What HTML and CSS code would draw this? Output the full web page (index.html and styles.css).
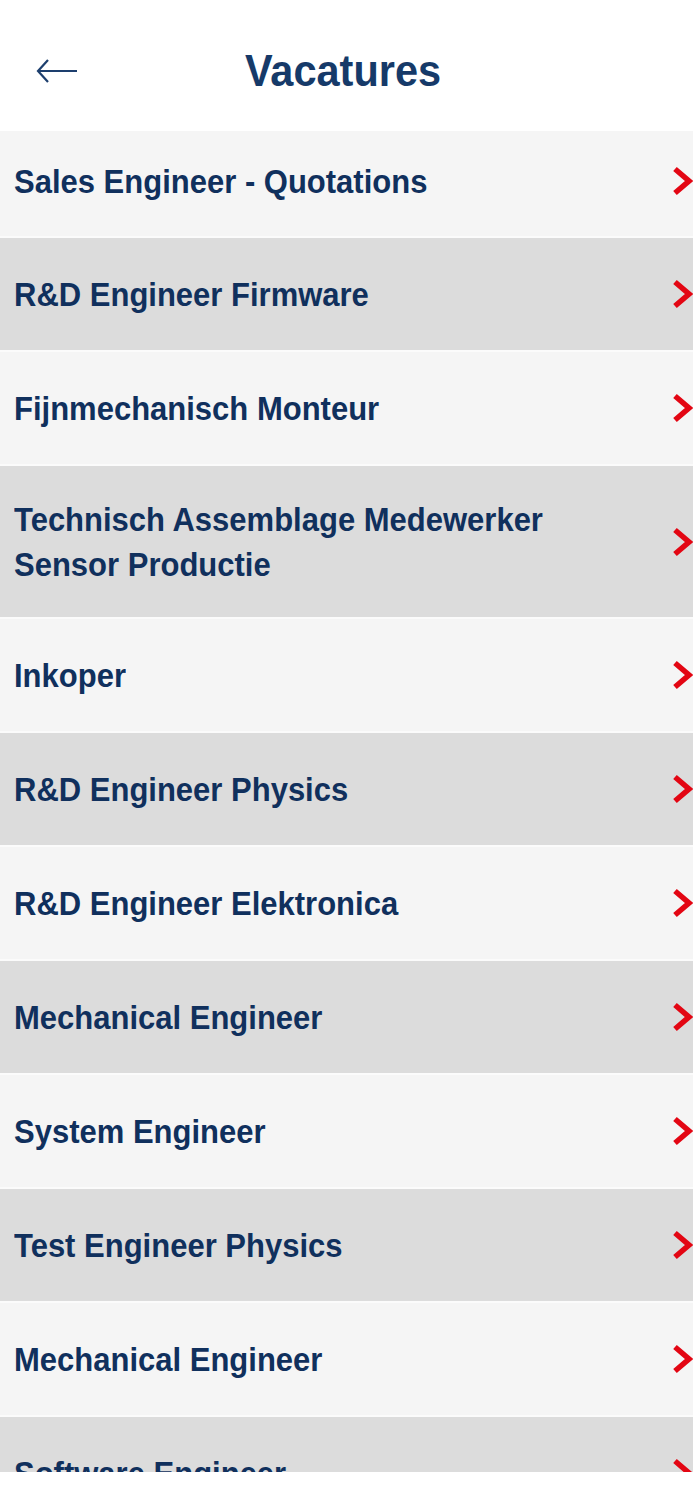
FILE: index.html
```html
<!DOCTYPE html>
<html lang="nl">
<head>
<meta charset="utf-8">
<title>Vacatures</title>
<link rel="stylesheet" href="styles.css">
</head>
<body>
<div class="page">
  <header class="topbar">
    <span class="back" aria-label="Terug">
      <svg width="42" height="26" viewBox="0 0 42 26"><path d="M2 13 H41 M12 2 L2 13 L12 24" fill="none" stroke="#1d3f6e" stroke-width="2.2" stroke-linejoin="miter"/></svg>
    </span>
    <h1 class="title">Vacatures</h1>
  </header>
  <ul class="jobs">
    <li class="job first"><span class="job-title">Sales Engineer - Quotations</span><svg class="chev" width="22" height="30" viewBox="0 0 22 30"><polyline points="4,3 18,15 4,27" fill="none" stroke="#e30613" stroke-width="5.5"/></svg></li>
    <li class="job"><span class="job-title">R&amp;D Engineer Firmware</span><svg class="chev" width="22" height="30" viewBox="0 0 22 30"><polyline points="4,3 18,15 4,27" fill="none" stroke="#e30613" stroke-width="5.5"/></svg></li>
    <li class="job"><span class="job-title">Fijnmechanisch Monteur</span><svg class="chev" width="22" height="30" viewBox="0 0 22 30"><polyline points="4,3 18,15 4,27" fill="none" stroke="#e30613" stroke-width="5.5"/></svg></li>
    <li class="job tall"><span class="job-title">Technisch Assemblage Medewerker Sensor Productie</span><svg class="chev" width="22" height="30" viewBox="0 0 22 30"><polyline points="4,3 18,15 4,27" fill="none" stroke="#e30613" stroke-width="5.5"/></svg></li>
    <li class="job"><span class="job-title">Inkoper</span><svg class="chev" width="22" height="30" viewBox="0 0 22 30"><polyline points="4,3 18,15 4,27" fill="none" stroke="#e30613" stroke-width="5.5"/></svg></li>
    <li class="job"><span class="job-title">R&amp;D Engineer Physics</span><svg class="chev" width="22" height="30" viewBox="0 0 22 30"><polyline points="4,3 18,15 4,27" fill="none" stroke="#e30613" stroke-width="5.5"/></svg></li>
    <li class="job"><span class="job-title">R&amp;D Engineer Elektronica</span><svg class="chev" width="22" height="30" viewBox="0 0 22 30"><polyline points="4,3 18,15 4,27" fill="none" stroke="#e30613" stroke-width="5.5"/></svg></li>
    <li class="job"><span class="job-title">Mechanical Engineer</span><svg class="chev" width="22" height="30" viewBox="0 0 22 30"><polyline points="4,3 18,15 4,27" fill="none" stroke="#e30613" stroke-width="5.5"/></svg></li>
    <li class="job"><span class="job-title">System Engineer</span><svg class="chev" width="22" height="30" viewBox="0 0 22 30"><polyline points="4,3 18,15 4,27" fill="none" stroke="#e30613" stroke-width="5.5"/></svg></li>
    <li class="job"><span class="job-title">Test Engineer Physics</span><svg class="chev" width="22" height="30" viewBox="0 0 22 30"><polyline points="4,3 18,15 4,27" fill="none" stroke="#e30613" stroke-width="5.5"/></svg></li>
    <li class="job"><span class="job-title">Mechanical Engineer</span><svg class="chev" width="22" height="30" viewBox="0 0 22 30"><polyline points="4,3 18,15 4,27" fill="none" stroke="#e30613" stroke-width="5.5"/></svg></li>
    <li class="job last"><span class="job-title">Software Engineer</span><svg class="chev" width="22" height="30" viewBox="0 0 22 30"><polyline points="4,3 18,15 4,27" fill="none" stroke="#e30613" stroke-width="5.5"/></svg></li>
  </ul>
</div>
</body>
</html>
```

FILE: styles.css
```css
html, body {
  margin: 0;
  padding: 0;
  background: #ffffff;
}

body {
  font-family: "Liberation Sans", Arial, sans-serif;
  color: #10305d;
}

.page {
  width: 693px;
  height: 1472px;
  overflow: hidden;
}

.topbar {
  height: 131px;
  display: flex;
  align-items: center;
  position: relative;
  background: #ffffff;
}

.back {
  display: flex;
  margin-left: 36px;
  margin-top: 10px;
}

.title {
  position: absolute;
  left: 0;
  right: 0;
  top: 0;
  bottom: 0;
  margin: 0;
  display: flex;
  align-items: center;
  justify-content: center;
  padding-top: 10px;
  padding-right: 7px;
  font-size: 41.5px;
  font-weight: bold;
  color: #163a69;
  pointer-events: none;
  transform: scaleY(1.06);
}

.jobs {
  list-style: none;
  margin: 0;
  padding: 0;
}

.job {
  box-sizing: border-box;
  height: 114px;
  display: flex;
  align-items: center;
  justify-content: space-between;
  padding-left: 14px;
  border-bottom: 2px solid #fbfbfb;
  background: #f5f5f5;
}

.job:nth-child(even) {
  background: #dcdcdc;
}

.job.first {
  height: 107px;
  padding-bottom: 6px;
}

.job.tall {
  height: 153px;
}

.job-title {
  font-size: 31px;
  font-weight: bold;
  line-height: 42px;
  color: #10305d;
  padding-right: 80px;
  padding-top: 2px;
  transform: scaleY(1.06);
  transform-origin: left center;
}

.chev {
  flex: none;
  overflow: visible;
}
```
